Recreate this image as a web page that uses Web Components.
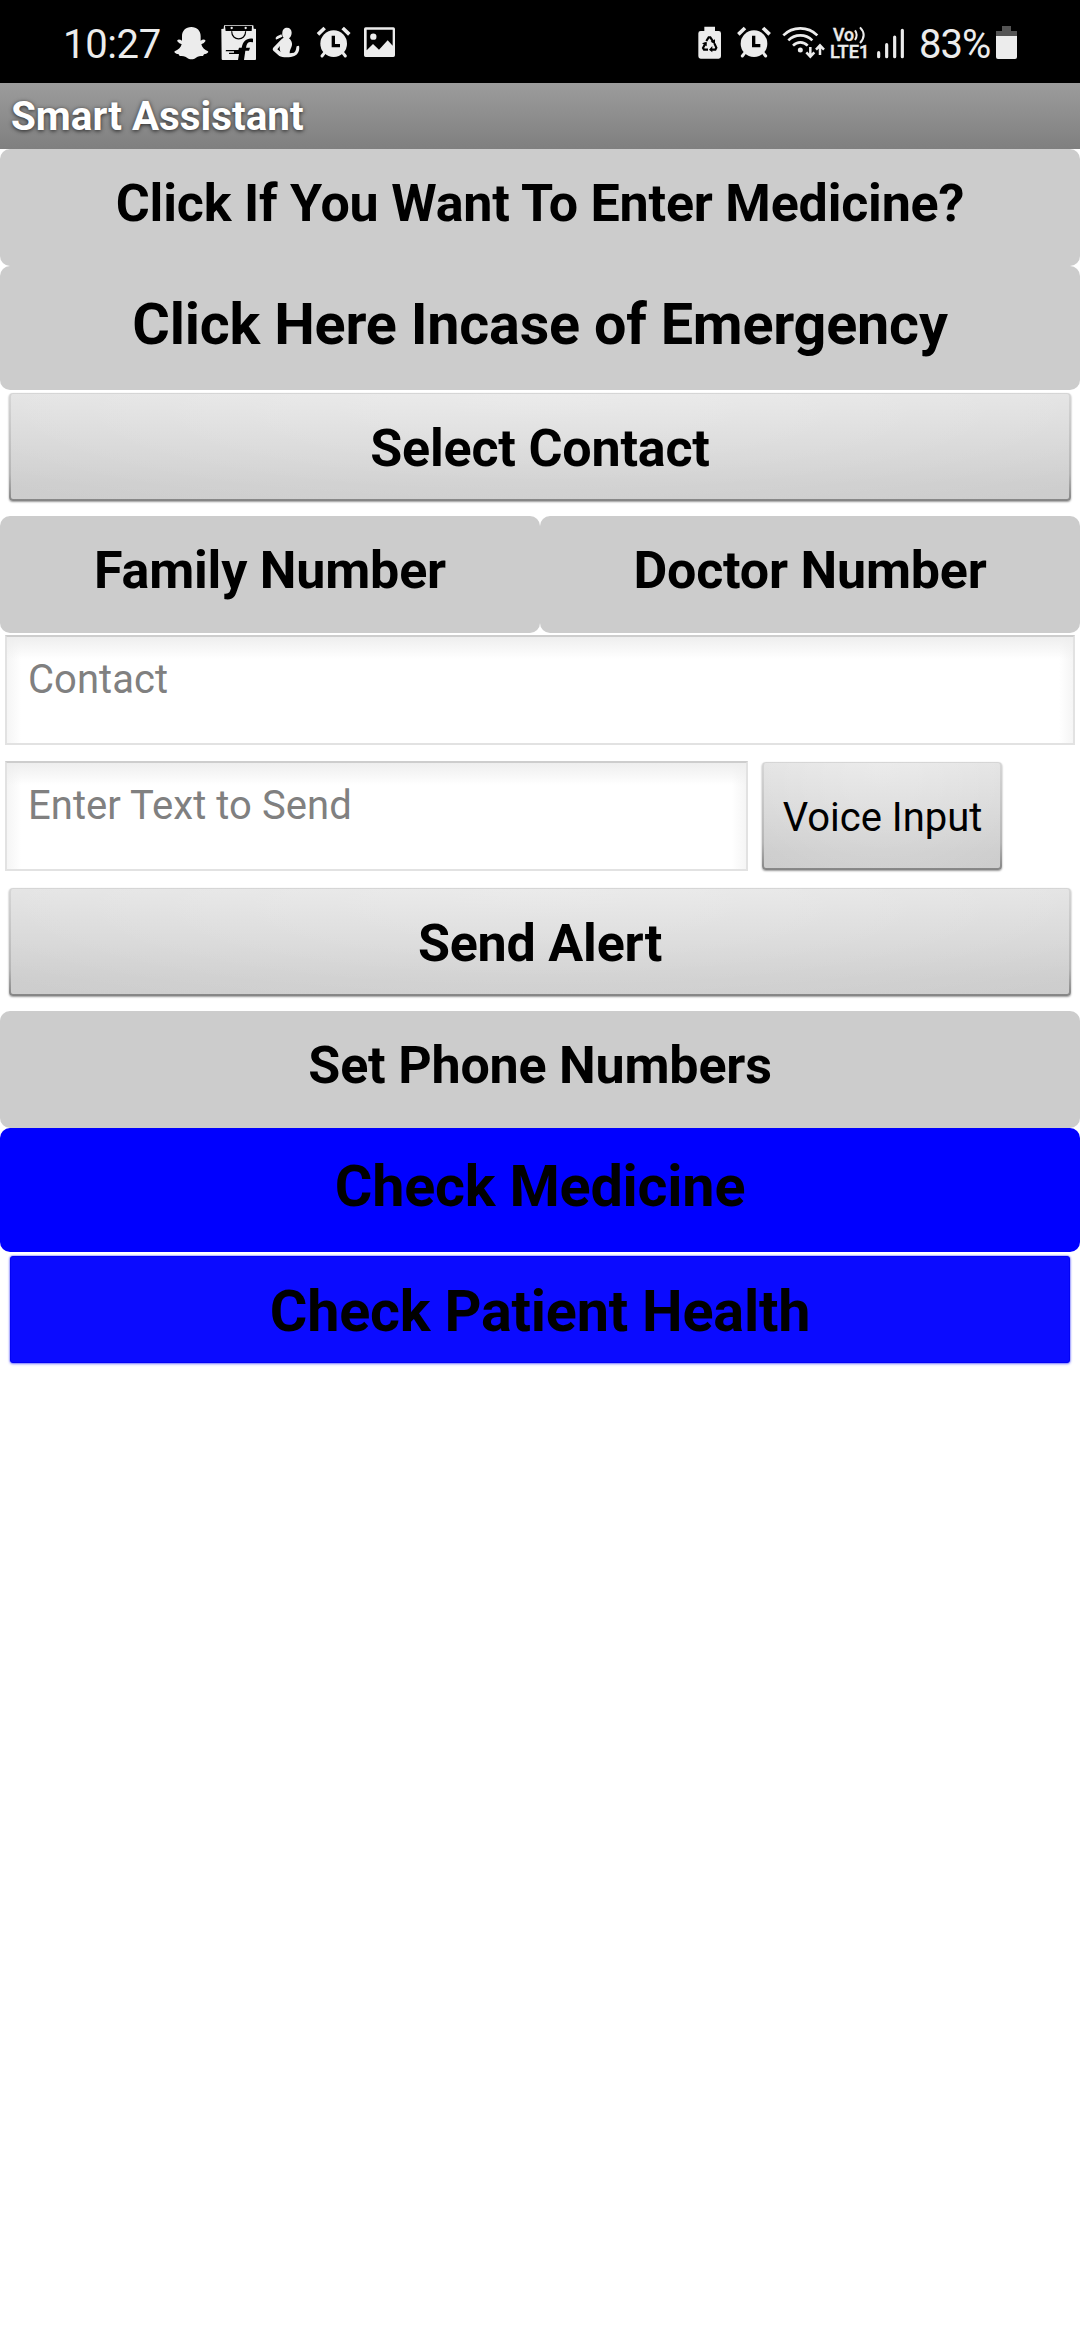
<!DOCTYPE html>
<html lang="en">
<head>
<meta charset="utf-8">
<title>Smart Assistant</title>
<style>
html,body{margin:0;padding:0;background:#fff;font-family:Roboto,"Liberation Sans",sans-serif;color:#000}
</style>
</head>
<body>
<smart-app></smart-app>
<script>
const define = (name, html, setup) => customElements.define(name, class extends HTMLElement {
  connectedCallback() {
    if (this.shadowRoot) return;
    const root = this.attachShadow({ mode: 'open' });
    root.innerHTML = html;
    if (setup) setup(this, root);
  }
});

// Icons share a 3x grid: three units of the view box make one pixel.
const F = '#ececec';
const alarm = `<g fill="${F}"><circle cx="41" cy="41" r="40"/></g>
 <path d="M40 17V47H60" fill="none" stroke="#000" stroke-width="10"/>
 <g stroke="${F}" stroke-width="11" stroke-linecap="round"><path d="M14 68L6 78M68 68L76 78" stroke-width="9"/></g>
 <g stroke="${F}" stroke-width="11"><path d="M-6 13L14 -6M88 13L68 -6"/></g>`;
const icons = {
  ghost: [399, 138, `<path fill="${F}" d="M454 81C471 81 482 92 482 109V122C487 119 493 117 496 121C498 125 491 130 484 133C486 143 494 150 504 154C507 157 503 161 492 163L489 168C480 168 475 168 468 173C460 179 449 179 441 173C434 168 428 168 419 168L416 163C405 161 401 157 404 154C414 150 423 143 425 133C418 130 410 125 412 121C415 117 421 119 426 122V109C426 92 437 81 454 81Z"/>`],
  bag: [537, 150, `<path fill="${F}" d="M544 87L551 86L552 76H640L641 86L648 87V178Q648 180 645 180H612L616 152H627L630 143H618C620 131 624 126 631 126L639 127V116C619 113 609 124 605 143H597L595 150H558L557 154H582V158H567V162H597L594 180H548Q545 180 545 177Z"/><path fill="#000" d="M555 78H636L635 93H557Z"/><g fill="${F}"><circle cx="575" cy="84" r="3.5"/><circle cx="617" cy="84" r="3.5"/></g><path fill="none" stroke="#000" stroke-width="3.5" d="M575 94C575 124 617 124 617 94"/>`],
  figure: [687, 141, `<g fill="${F}"><path d="M741 83C750 83 755 89 755 98C755 106 751 112 747 115C754 121 757 128 756 135C755 143 748 150 749 160L762 158C769 153 768 145 770 139L777 137C780 150 774 163 763 168C752 173 727 173 718 168L700 152C697 149 698 145 701 142L725 117L731 113C727 109 726 104 727 98C727 89 733 83 741 83Z"/><path d="M724 103L711 109Q706 112 707 117L709 119L727 110Z"/></g><path fill="#000" d="M712 148L720 138C718 145 719 150 722 156Z"/><path d="M708 122L723 116" stroke="#000" stroke-width="4"/>`],
  alarmL: [828, 135, `<g transform="translate(840,90)">${alarm}</g>`],
  picture: [963, 120, `<path fill="${F}" fill-rule="evenodd" d="M977 82H1060Q1065 82 1065 87V166Q1065 171 1060 171H977Q972 171 972 166V87Q972 82 977 82ZM980 89V151L999 132L1017 149L1043 121L1058 137V89Z"/><circle cx="1000" cy="110" r="9.5" fill="${F}"/>`],
  recycle: [45, 120, `<path fill="${F}" d="M73 93V80H105V93H116Q123 93 123 100V169Q123 176 116 176H62Q55 176 55 169V100Q55 93 62 93Z"/><g fill="none" stroke="#000" stroke-width="6.5"><path d="M79 123L86 112H91L99 124"/><path d="M77 129L69 144L72 149H84"/><path d="M103 130L109 143L106 149H92"/></g><g fill="#000"><path d="M92 125L105 118V133Z"/><path d="M66 130L80 125V139Z"/><path d="M97 138V157L87 149Z"/></g>`],
  alarmR: [165, 132, `<g transform="translate(181,90)">${alarm}</g>`],
  wifi: [297, 147, `<g fill="none" stroke="${F}" stroke-width="8"><path d="M310 106C338 78 384 78 412 106"/><path d="M325 121C345 101 377 101 397 121"/><path d="M339 137C352 124 370 124 383 137"/></g><circle cx="361" cy="150" r="7.5" fill="${F}"/><g stroke="${F}" stroke-width="7.5" fill="none"><path d="M391 141V170M379 157L391 170L403 157"/><path d="M420 165V137M408 149L420 136L432 149"/></g>`],
  volte: [444, 132, `<g fill="${F}" stroke="${F}" stroke-width="1.2" font-family="Roboto"><text x="459" y="122" font-size="54" font-weight="500" textLength="63" lengthAdjust="spacingAndGlyphs">Vo</text><text x="450" y="174" font-size="54" font-weight="500" textLength="118" lengthAdjust="spacingAndGlyphs">LTE1</text></g><g fill="none" stroke="${F}" stroke-width="6"><path d="M525 91Q535 105 525 120"/><path d="M540 82Q562 105 540 129"/></g>`],
  signal: [576, 135, `<g stroke="${F}" stroke-width="9.5" stroke-linecap="round"><path d="M596 158V170M620 134V170M644 111V170M667 91V170"/></g>`],
  battery: [939, 81, `<path fill="#545454" d="M966 78H993V93H1011V108H948V93H966Z"/><path fill="${F}" d="M948 108H1011V171Q1011 177 1005 177H954Q948 177 948 171Z"/>`]
};

define('status-icon', `<style>:host{display:block;flex:none;height:83px}svg{display:block;height:83px}</style>`, (el, root) => {
  const [x, w, body] = icons[el.getAttribute('name')];
  root.innerHTML += `<svg width="${w / 3}" height="83" viewBox="${x} 0 ${w} 249">${body}</svg>`;
});

define('status-bar', `<style>
:host{display:flex;justify-content:space-between;height:83px;background:#000;color:#ececec;padding:0 60px;box-sizing:border-box;font-size:40px;line-height:89px}
div{display:flex}
.clock{width:110px;padding-left:3px;letter-spacing:-.35px}
.pct{width:74px;padding-left:2px;letter-spacing:-1px}
</style>
<div><span class="clock">10:27</span><status-icon name="ghost"></status-icon><status-icon name="bag"></status-icon><status-icon name="figure"></status-icon><status-icon name="alarmL"></status-icon><status-icon name="picture"></status-icon></div>
<div><status-icon name="recycle"></status-icon><status-icon name="alarmR"></status-icon><status-icon name="wifi"></status-icon><status-icon name="volte"></status-icon><status-icon name="signal"></status-icon><span class="pct">83%</span><status-icon name="battery"></status-icon></div>`);

define('title-bar', `<style>:host{display:block;height:66px;line-height:67px;padding-left:11px;box-sizing:border-box;color:#fff;font-weight:700;font-size:40.4px;background:linear-gradient(#9c9c9c,#7f7f7f);text-shadow:0 1px 4px rgba(0,0,0,.75)}</style><slot></slot>`);

define('flat-button', `<style>
:host{display:flex;align-items:center;justify-content:center;height:117px;box-sizing:border-box;padding-bottom:8px;border-radius:10px;background:#ccc;font-weight:700;font-size:52px;letter-spacing:-.2px;line-height:1;white-space:nowrap}
:host([large]){height:124px;font-size:57.5px;padding-bottom:6px}
:host([blue]){background:#00f}
</style><slot></slot>`);

define('raised-button', `<style>
:host{display:block;height:126px;box-sizing:border-box;padding:3px 9px 15px;font-weight:700;font-size:52px;letter-spacing:-.2px}
div{height:108px;box-sizing:border-box;padding-top:4px;display:flex;align-items:center;justify-content:center;border-radius:4px;border:2px solid transparent;border-top-width:1px;
background:radial-gradient(ellipse 75% 150% at 50% -20%,rgba(255,255,255,.35),rgba(255,255,255,0)) padding-box,linear-gradient(#e2e2e2,#cecece 85%,#cdcdcd) padding-box,linear-gradient(#d6d6d6,#b5b5b5 75%,#858585) border-box;
box-shadow:0 1px 2px rgba(0,0,0,.4);line-height:1;white-space:nowrap}
:host([compact]){width:258px;font-size:40px;font-weight:400;letter-spacing:0;flex:none}
:host([compact]) div{padding:5px 0 0 1px}
:host([blue]){font-size:57.5px;padding:4px 10px 15px}
:host([blue]) div{height:107px;padding-top:4px;background:#0b0bff;border:1px solid #0202f4;border-radius:3px;box-shadow:0 0 2px #33f,0 1px 3px rgba(40,40,255,.45)}
</style><div><slot></slot></div>`);

define('text-field', `<style>
:host{display:block;height:126px;box-sizing:border-box;padding:2px 5px 14px;color:#808080;font-size:40px;letter-spacing:.05px;flex:none}
div{height:110px;box-sizing:border-box;padding:23px 21px;line-height:40px;border:2px solid #e2e2e2;border-top-color:#cdcdcd;
background:linear-gradient(#eee,rgba(255,255,255,0) 22px),linear-gradient(90deg,#f5f5f5,rgba(255,255,255,0) 14px),linear-gradient(270deg,#f5f5f5,#fff 14px)}
:host([short]){width:753px}
</style><div><slot></slot></div>`);

define('button-row', `<style>:host{display:flex}</style><slot></slot>`);

define('smart-app', `<style>:host{display:block;width:1080px;height:2340px;overflow:hidden;background:#fff}main{display:flex;flex-direction:column}
main>*{flex:none}flat-button.half{flex:1 1 0}</style>
<status-bar></status-bar>
<title-bar>Smart Assistant</title-bar>
<main>
<flat-button>Click If You Want To Enter Medicine?</flat-button>
<flat-button large>Click Here Incase of Emergency</flat-button>
<raised-button>Select Contact</raised-button>
<button-row><flat-button class="half">Family Number</flat-button><flat-button class="half">Doctor Number</flat-button></button-row>
<text-field>Contact</text-field>
<button-row><text-field short>Enter Text to Send</text-field><raised-button compact>Voice Input</raised-button></button-row>
<raised-button>Send Alert</raised-button>
<flat-button>Set Phone Numbers</flat-button>
<flat-button large blue>Check Medicine</flat-button>
<raised-button blue>Check Patient Health</raised-button>
</main>`);
</script>
</body>
</html>
